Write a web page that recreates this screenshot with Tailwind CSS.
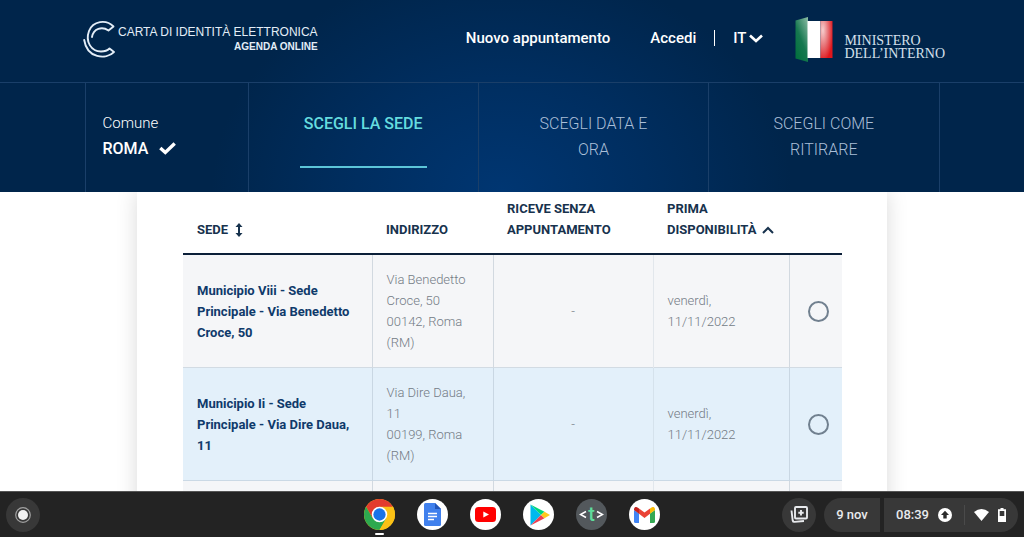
<!DOCTYPE html>
<html lang="it">
  <head>
    <meta charset="UTF-8" />
    <meta name="viewport" content="width=device-width, initial-scale=1.0" />
    <script src="https://cdn.jsdelivr.net/npm/@tailwindcss/browser@4"></script>
    <title>Carta di identità elettronica - Agenda online</title>
  </head>
  <body class="h-screen flex flex-col overflow-hidden bg-white font-['Roboto',sans-serif]">
    <header class="shrink-0 text-white bg-[radial-gradient(ellipse_290px_230px_at_49%_100%,#003672_0%,#002e60_50%,#00254b_100%)]">
      <div class="h-[82px] w-full max-w-[866px] pl-1 mx-auto flex items-center">
        <a href="#" class="flex items-center gap-px pb-1 text-[#e3edf7] font-['Liberation_Sans',sans-serif]">
          <svg class="w-[34px] h-10" viewBox="0 0 34 40" fill="none" stroke="currentColor" stroke-width="1.900" stroke-linecap="round" stroke-linejoin="round">
            <path d="M9 18C10.500 9.500 19 7 25.500 11.500L30.500 7.500C23 0 10 2 6 12C2 23 8.500 32.500 18 32.500C22 32.500 24.500 31.500 26.500 29.500L31 33C23 41 4 39.500 1.200 21" />
          </svg>
          <span class="text-right text-[12px] leading-[15px] whitespace-nowrap">
            CARTA DI IDENTITÀ ELETTRONICA
            <span class="block text-[10px] leading-[14px] font-bold">AGENDA ONLINE</span>
          </span>
        </a>
        <nav class="flex items-center h-full ml-auto mr-8 pb-[6px] text-[15px] font-medium whitespace-nowrap">
          <a href="#">Nuovo appuntamento</a>
          <a href="#" class="ml-10">Accedi</a>
          <span class="w-px h-4 bg-white mx-[18px]"></span>
          <button class="flex items-center gap-[3px]">
            IT
            <svg class="w-[14px] h-[9px]" viewBox="0 0 14 9" fill="none" stroke="currentColor" stroke-width="2.600"><path d="M1 1.500L7 7L13 1.500" /></svg>
          </button>
        </nav>
        <a href="#" class="flex items-center gap-[11px] pb-[5px]">
          <svg class="w-[38px] h-[46px]" viewBox="0 0 38 46">
            <defs>
              <linearGradient id="green" x1="1" y1="0" x2="0.300" y2="1">
                <stop offset="0" stop-color="#8dbda6" />
                <stop offset="0.600" stop-color="#16784f" />
                <stop offset="1" stop-color="#04713f" />
              </linearGradient>
              <radialGradient id="red" cx="0.200" cy="0.250" r="0.850">
                <stop offset="0" stop-color="#f6cfcf" />
                <stop offset="0.500" stop-color="#e77579" />
                <stop offset="1" stop-color="#e0161c" />
              </radialGradient>
            </defs>
            <path d="M0.500 4.500L13 1V46L0.500 42.500z" fill="url(#green)" />
            <path d="M12.500 5H25.500V42H12.500z" fill="#fff" />
            <path d="M25.500 5H37.500V42H25.500z" fill="url(#red)" />
          </svg>
          <span class="pt-4 text-[14px] leading-[13px] text-[#d5e0ec] font-['Liberation_Serif',serif]">MINISTERO<br />DELL’INTERNO</span>
        </a>
      </div>

      <div class="border-t border-[#1a3f69]">
        <ol class="h-[109px] w-full max-w-[855px] mx-auto grid grid-cols-[163px_1fr_1fr_1fr] border-r border-[#1a3f69] text-[16px] leading-[26px] text-center">
          <li class="border-l border-[#1a3f69] pt-7 pl-[17px] text-left leading-[25px]">
            <span class="block text-[15px] font-light">Comune</span>
            <span class="flex items-center gap-[11px] font-medium">
              ROMA
              <svg class="w-[17px] h-[13px]" viewBox="0 0 17 13" fill="none" stroke="currentColor" stroke-width="3.400"><path d="M1.300 6L6.300 10.500L15.700 1.500" /></svg>
            </span>
          </li>
          <li class="border-l border-[#1a3f69] pt-7 px-[51px]">
            <a href="#" class="block pb-[29px] border-b-2 border-[#5cc5d8] text-[#65dcdf] text-[16px] font-medium whitespace-nowrap">SCEGLI LA SEDE</a>
          </li>
          <li class="border-l border-[#1a3f69] pt-7 px-[51px] font-light text-[#aabfd8]">SCEGLI DATA E ORA</li>
          <li class="border-l border-[#1a3f69] pt-7 px-[51px] font-light text-[#aabfd8]">SCEGLI COME RITIRARE</li>
        </ol>
      </div>
    </header>

    <main class="flex-1 min-h-0 overflow-hidden">
      <div class="w-full max-w-[750px] min-h-full mx-auto pt-[6px] pl-[46px] pr-[45px] bg-white shadow-[0_0_20px_rgba(0,0,0,0.15)]">
        <table class="w-full table-fixed border-collapse text-left text-[13px] leading-[21px] text-[#737b85]">
          <colgroup>
            <col />
            <col class="w-[121px]" />
            <col class="w-[160px]" />
            <col class="w-[136px]" />
            <col class="w-[53px]" />
          </colgroup>
          <thead class="align-bottom text-[#17324d] border-b-2 border-[#0b1f38]">
            <tr>
              <th class="px-[14px] pb-[13px]">
                <button class="flex items-center gap-[7px] font-bold">
                  SEDE
                  <svg class="w-2 h-[14px]" viewBox="0 0 8 14" fill="currentColor"><path d="M4 0L7.500 4H5V10H7.500L4 14L0.500 10H3V4H0.500z" /></svg>
                </button>
              </th>
              <th class="px-[14px] pb-[13px]">INDIRIZZO</th>
              <th class="px-[14px] pb-[13px]">RICEVE SENZA APPUNTAMENTO</th>
              <th class="px-[14px] pb-[13px]">
                PRIMA
                <button class="flex items-center gap-[6px] font-bold">
                  DISPONIBILITÀ
                  <svg class="w-3 h-2" viewBox="0 0 12 8" fill="none" stroke="currentColor" stroke-width="2"><path d="M1 7L6 2L11 7" /></svg>
                </button>
              </th>
              <th></th>
            </tr>
          </thead>
          <tbody class="font-light">
            <tr class="bg-[#f5f6f8] border-b border-[#d2dbe3]">
              <th id="sede-1" class="py-[14px] px-[14px] font-bold text-[#0f3a6b]">Municipio Viii - Sede Principale - Via Benedetto Croce, 50</th>
              <td class="py-[14px] px-[14px] border-l border-[#d2d9e0]">Via Benedetto Croce, 50<br />00142, Roma (RM)</td>
              <td class="px-[14px] border-l border-[#d2d9e0] text-center">-</td>
              <td class="px-[14px] border-l border-[#e2e7ec]">venerdì, 11/11/2022</td>
              <td class="pl-[18px] border-l border-[#d2d9e0]">
                <input type="radio" name="sede" aria-labelledby="sede-1" class="block appearance-none size-[21px] rounded-full border-2 border-[#71808f]" />
              </td>
            </tr>
            <tr class="bg-[#e3f0fa] border-b border-[#cbd9e5]">
              <th id="sede-2" class="py-[14px] px-[14px] font-bold text-[#0f3a6b]">Municipio Ii - Sede Principale - Via Dire Daua, 11</th>
              <td class="py-[14px] px-[14px] border-l border-[#c9d7e3]">Via Dire Daua, 11<br />00199, Roma (RM)</td>
              <td class="px-[14px] border-l border-[#c9d7e3] text-center">-</td>
              <td class="px-[14px] border-l border-[#d5e2ec]">venerdì, 11/11/2022</td>
              <td class="pl-[18px] border-l border-[#c9d7e3]">
                <input type="radio" name="sede" aria-labelledby="sede-2" class="block appearance-none size-[21px] rounded-full border-2 border-[#71808f]" />
              </td>
            </tr>
            <tr class="bg-[#f5f6f8] h-28">
              <td></td>
              <td class="border-l border-[#d2d9e0]"></td>
              <td class="border-l border-[#d2d9e0]"></td>
              <td class="border-l border-[#e2e7ec]"></td>
              <td class="border-l border-[#d2d9e0]"></td>
            </tr>
          </tbody>
        </table>
      </div>
    </main>

    <footer class="relative shrink-0 h-[46px] px-[6px] grid grid-cols-[1fr_auto_1fr] items-center bg-[#232323] border-t border-[#555] text-[#e8eaed]">
      <button aria-label="Avvio app" class="size-[34px] rounded-full bg-[#383838] flex items-center justify-center">
        <svg class="size-4" viewBox="0 0 16 16"><circle cx="8" cy="8" r="7.300" fill="none" stroke="#a0a0a0" stroke-width="1.200" /><circle cx="8" cy="8" r="5" fill="#f1f1f1" /></svg>
      </button>

      <div class="flex items-center gap-[22px]">
        <button aria-label="Chrome" class="relative size-[31px]">
          <svg class="size-[31px]" viewBox="0 0 48 48">
            <circle cx="24" cy="24" r="24" fill="#fbc116" />
            <path d="M24 24L44.780 12A24 24 0 0 0 3.220 12L13.600 30z" fill="#e33b2e" />
            <path d="M3.220 12A24 24 0 0 0 24 48L34.400 30L24 24L13.600 30z" fill="#2da94f" />
            <path d="M24 12H44.780A24 24 0 0 1 24 48L34.400 30z" fill="#fbc116" />
            <circle cx="24" cy="24" r="12" fill="#fff" />
            <circle cx="24" cy="24" r="9.500" fill="#1a73e8" />
          </svg>
          <span class="absolute left-[11px] -bottom-[5px] w-[9px] h-[2px] rounded bg-white"></span>
        </button>
        <button aria-label="Documenti" class="size-[31px] rounded-full bg-white flex items-center justify-center">
          <svg class="w-[17px] h-[23px]" viewBox="0 0 17 23">
            <path d="M1.500 0H11L17 6V21.500Q17 23 15.500 23H1.500Q0 23 0 21.500V1.500Q0 0 1.500 0z" fill="#4080ed" />
            <path d="M11 0L17 6H11z" fill="#2255b8" />
            <path d="M4 10.500H13M4 13.500H13M4 16.500H10" stroke="#fff" stroke-width="1.400" />
          </svg>
        </button>
        <button aria-label="YouTube" class="size-[31px] rounded-full bg-white flex items-center justify-center">
          <svg class="w-[21px] h-[15px]" viewBox="0 0 21 15"><rect width="21" height="15" rx="3.500" fill="#f00" /><path d="M8.300 4.500L14 7.500L8.300 10.500z" fill="#fff" /></svg>
        </button>
        <button aria-label="Play Store" class="size-[31px] rounded-full bg-white flex items-center justify-center">
          <svg class="w-5 h-[22px] ml-[3px]" viewBox="0 0 20 22">
            <path d="M0.500 0.500V21.500L11 11z" fill="#00b9ee" />
            <path d="M0.500 0.500L14.500 7.800L11 11z" fill="#00d77b" />
            <path d="M0.500 21.500L14.500 14.200L11 11z" fill="#ee3f52" />
            <path d="M14.500 7.800L20 11L14.500 14.200L11 11z" fill="#ffc91c" />
          </svg>
        </button>
        <button aria-label="Text" class="size-[31px] rounded-full bg-[#53585c] flex items-center justify-center text-white">
          <svg class="w-2 h-[9px]" viewBox="0 0 8 9" fill="none" stroke="currentColor" stroke-width="1.500"><path d="M7 1.500L1.500 4.500L7 7.500" /></svg>
          <span class="px-px text-[20px] leading-5 font-medium text-[#5fdc9b] pb-[2px]">t</span>
          <svg class="w-2 h-[9px]" viewBox="0 0 8 9" fill="none" stroke="currentColor" stroke-width="1.500"><path d="M1 1.500L6.500 4.500L1 7.500" /></svg>
        </button>
        <button aria-label="Gmail" class="size-[31px] rounded-full bg-white flex items-center justify-center">
          <svg class="w-[21px] h-4" viewBox="0 0 21 16">
            <path d="M0 3V14.500Q0 16 1.500 16H5V6.500z" fill="#4285f4" />
            <path d="M21 3V14.500Q21 16 19.500 16H16V6.500z" fill="#34a853" />
            <path d="M16 1.500V6.800L21 3V2Q20.500 -1 17.500 0.400z" fill="#fbbc04" />
            <path d="M0 2V3L5 6.800V1.500L3.500 0.400Q0.500 -1 0 2z" fill="#c5221f" />
            <path d="M5 1.500L10.500 5.600L16 1.500V6.800L10.500 11L5 6.800z" fill="#ea4335" />
          </svg>
        </button>
      </div>

      <div class="flex items-center justify-end gap-1 text-[13px] font-medium">
        <button aria-label="Area appunti" class="size-[34px] mr-1 rounded-full bg-[#383838] flex items-center justify-center">
          <svg class="w-[18px] h-[17px]" viewBox="0 0 18 17" fill="none" stroke="currentColor" stroke-width="1.900"><rect x="5" y="1" width="12" height="11.500" rx="1" /><path d="M11 4V9.500M8.300 6.700H13.700M1.500 4.500L2.700 14.500Q3 16 4.500 15.900L14 15" /></svg>
        </button>
        <button class="h-[34px] w-14 rounded-l-full rounded-r bg-[#383838] whitespace-nowrap">9 nov</button>
        <button class="h-[34px] w-[134px] px-3 rounded-r-full rounded-l bg-[#383838] flex items-center">
          08:39
          <svg class="size-[14px] ml-[9px]" viewBox="0 0 14 14"><circle cx="7" cy="7" r="7" fill="#fff" /><path d="M7 2.800L11 7H8.700V10.500H5.300V7H3z" fill="#2b2b2b" /></svg>
          <span class="w-px h-5 ml-3 bg-[#4a4a4a]"></span>
          <svg class="w-[15px] h-3 ml-auto" viewBox="0 0 15 12" fill="#fff"><path d="M0 3Q7.500 -3 15 3L7.500 12z" /></svg>
          <svg class="w-2 h-[14px] ml-[9px]" viewBox="0 0 8 14"><path d="M2.500 0H5.500V1.300H8V14H0V1.300H2.500z" fill="#fff" /><path d="M1.700 3H6.300V8H1.700z" fill="#383838" /></svg>
        </button>
      </div>
    </footer>
  </body>
</html>
